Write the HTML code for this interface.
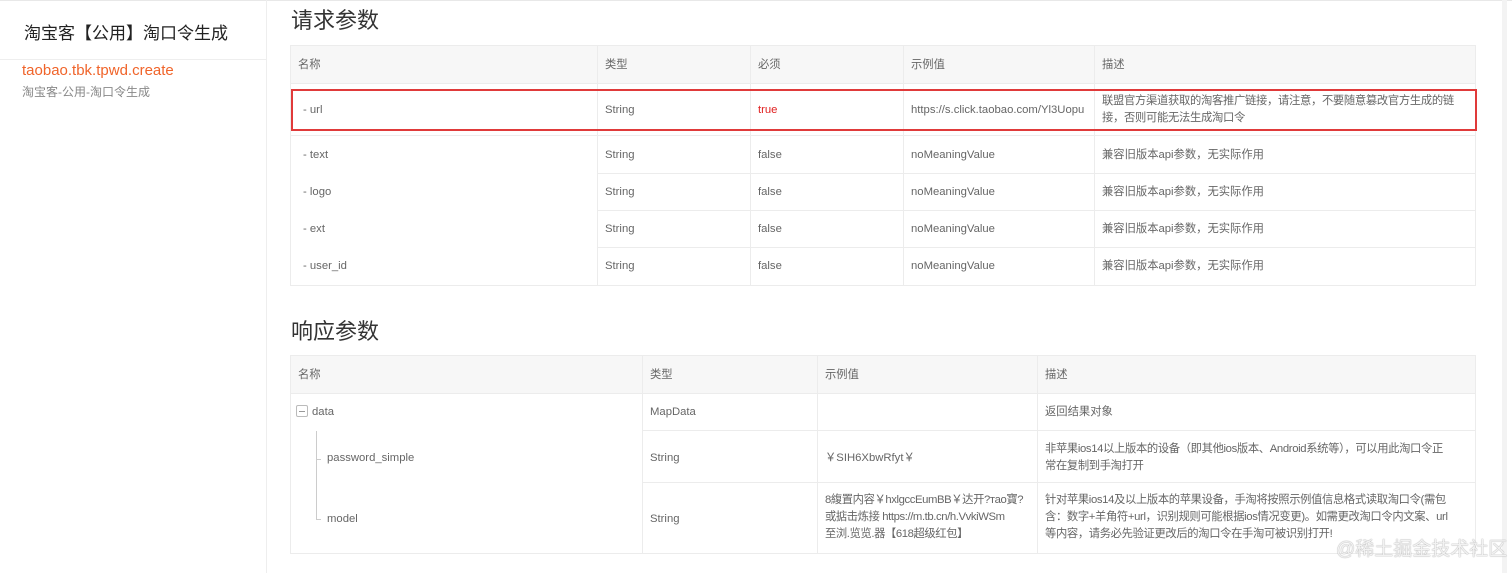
<!DOCTYPE html>
<html><head><meta charset="utf-8"><style>
*{margin:0;padding:0;box-sizing:border-box}
body{width:1512px;height:573px;background:#fff;position:relative;overflow:hidden;font-family:"Liberation Sans","Noto Sans CJK SC",sans-serif;color:#666;font-size:12px}
.a{position:absolute;white-space:nowrap}
.h{position:absolute;background:#ececec;height:1px}
.v{position:absolute;background:#ececec;width:1px}
.hd{position:absolute;background:#f7f7f7}
.t{position:absolute;font-size:11.3px;color:#666;line-height:17px;white-space:nowrap}
</style></head><body>
<div class="h" style="left:0;top:0;width:1512px;background:#e8e8e8"></div>
<div class="v" style="left:266px;top:0;height:573px;background:#eee"></div>
<div class="h" style="left:0;top:59px;width:266px;background:#eee"></div>
<div class="a" style="left:24px;top:19px;font-size:17px;color:#222">淘宝客【公用】淘口令生成</div>
<div class="a" style="left:22px;top:62px;font-size:15px;color:#f0642a">taobao.tbk.tpwd.create</div>
<div class="a" style="left:22px;top:83px;font-size:12px;color:#888">淘宝客-公用-淘口令生成</div>
<div class="v" style="left:1502px;top:0;height:573px;width:5px;background:#f3f3f3"></div>

<div class="a" style="left:291px;top:3px;font-size:22px;color:#333">请求参数</div>
<div class="hd" style="left:290px;top:45px;width:1186px;height:38px"></div>
<div class="h" style="left:290px;top:45px;width:1186px"></div>
<div class="h" style="left:290px;top:83px;width:1186px"></div>
<div class="h" style="left:290px;top:135px;width:1186px"></div>
<div class="h" style="left:597px;top:173px;width:879px"></div>
<div class="h" style="left:597px;top:210px;width:879px"></div>
<div class="h" style="left:597px;top:247px;width:879px"></div>
<div class="h" style="left:290px;top:285px;width:1186px"></div>
<div class="v" style="left:290px;top:45px;height:240px"></div>
<div class="v" style="left:597px;top:45px;height:240px"></div>
<div class="v" style="left:750px;top:45px;height:240px"></div>
<div class="v" style="left:903px;top:45px;height:240px"></div>
<div class="v" style="left:1094px;top:45px;height:240px"></div>
<div class="v" style="left:1475px;top:45px;height:240px"></div>
<div class="a" style="left:291px;top:89px;width:1186px;height:42px;border:2px solid #e03a3a"></div>
<div class="t" style="left:298px;top:57px">名称</div><div class="t" style="left:605px;top:57px">类型</div><div class="t" style="left:758px;top:57px">必须</div><div class="t" style="left:911px;top:57px">示例值</div><div class="t" style="left:1102px;top:57px">描述</div>
<div class="t" style="left:303px;top:102px">- url</div><div class="t" style="left:605px;top:102px">String</div><div class="t" style="left:758px;top:102px;color:#e02020">true</div><div class="t" style="left:911px;top:102px">https://s.click.taobao.com/Yl3Uopu</div>
<div class="t" style="left:1102px;top:93px;letter-spacing:-0.3px">联盟官方渠道获取的淘客推广链接，请注意，不要随意篡改官方生成的链<br>接，否则可能无法生成淘口令</div>
<div class="t" style="left:303px;top:147px">- text</div><div class="t" style="left:605px;top:147px">String</div><div class="t" style="left:758px;top:147px">false</div><div class="t" style="left:911px;top:147px">noMeaningValue</div><div class="t" style="left:1102px;top:147px">兼容旧版本api参数，无实际作用</div>
<div class="t" style="left:303px;top:184px">- logo</div><div class="t" style="left:605px;top:184px">String</div><div class="t" style="left:758px;top:184px">false</div><div class="t" style="left:911px;top:184px">noMeaningValue</div><div class="t" style="left:1102px;top:184px">兼容旧版本api参数，无实际作用</div>
<div class="t" style="left:303px;top:221px">- ext</div><div class="t" style="left:605px;top:221px">String</div><div class="t" style="left:758px;top:221px">false</div><div class="t" style="left:911px;top:221px">noMeaningValue</div><div class="t" style="left:1102px;top:221px">兼容旧版本api参数，无实际作用</div>
<div class="t" style="left:303px;top:258px">- user_id</div><div class="t" style="left:605px;top:258px">String</div><div class="t" style="left:758px;top:258px">false</div><div class="t" style="left:911px;top:258px">noMeaningValue</div><div class="t" style="left:1102px;top:258px">兼容旧版本api参数，无实际作用</div>

<div class="a" style="left:291px;top:314px;font-size:22px;color:#333">响应参数</div>
<div class="hd" style="left:290px;top:355px;width:1186px;height:38px"></div>
<div class="h" style="left:290px;top:355px;width:1186px"></div>
<div class="h" style="left:290px;top:393px;width:1186px"></div>
<div class="h" style="left:642px;top:430px;width:834px"></div>
<div class="h" style="left:642px;top:482px;width:834px"></div>
<div class="h" style="left:290px;top:553px;width:1186px"></div>
<div class="v" style="left:290px;top:355px;height:198px"></div>
<div class="v" style="left:642px;top:355px;height:198px"></div>
<div class="v" style="left:817px;top:355px;height:198px"></div>
<div class="v" style="left:1037px;top:355px;height:198px"></div>
<div class="v" style="left:1475px;top:355px;height:198px"></div>
<div class="t" style="left:298px;top:367px">名称</div><div class="t" style="left:650px;top:367px">类型</div><div class="t" style="left:825px;top:367px">示例值</div><div class="t" style="left:1045px;top:367px">描述</div>
<div class="a" style="left:296px;top:405px;width:12px;height:12px;border:1px solid #bbb;border-radius:2px"></div>
<div class="a" style="left:299px;top:411px;width:6px;height:1px;background:#999"></div>
<div class="t" style="left:312px;top:404px">data</div>
<div class="v" style="left:316px;top:431px;height:88px;background:#ccc"></div>
<div class="h" style="left:316px;top:459px;width:5px;background:#ccc"></div>
<div class="h" style="left:316px;top:519px;width:5px;background:#ccc"></div>
<div class="t" style="left:327px;top:450px">password_simple</div>
<div class="t" style="left:327px;top:511px">model</div>
<div class="t" style="left:650px;top:404px">MapData</div><div class="t" style="left:650px;top:450px">String</div><div class="t" style="left:650px;top:511px">String</div>
<div class="t" style="left:825px;top:450px">￥SIH6XbwRfyt￥</div>
<div class="t" style="left:825px;top:492px;letter-spacing:-0.4px">8緮置内容￥hxlgccEumBB￥达开?тao寶?<br>或掂击炼接 https://m.tb.cn/h.VvkiWSm<br>至浏.览览.器【618超级红包】</div>
<div class="t" style="left:1045px;top:404px">返回结果对象</div>
<div class="t" style="left:1045px;top:441px;letter-spacing:-0.35px">非苹果ios14以上版本的设备（即其他ios版本、Android系统等），可以用此淘口令正<br>常在复制到手淘打开</div>
<div class="t" style="left:1045px;top:492px;letter-spacing:-0.35px">针对苹果ios14及以上版本的苹果设备，手淘将按照示例值信息格式读取淘口令(需包<br>含：数字+羊角符+url，识别规则可能根据ios情况变更)。如需更改淘口令内文案、url<br>等内容，请务必先验证更改后的淘口令在手淘可被识别打开!</div>
<div class="a" style="left:1336px;top:534px;font-size:19px;color:#f2f2f2;text-shadow:0 0 1px #777"><span>@稀土掘金技术社区</span></div>
</body></html>
